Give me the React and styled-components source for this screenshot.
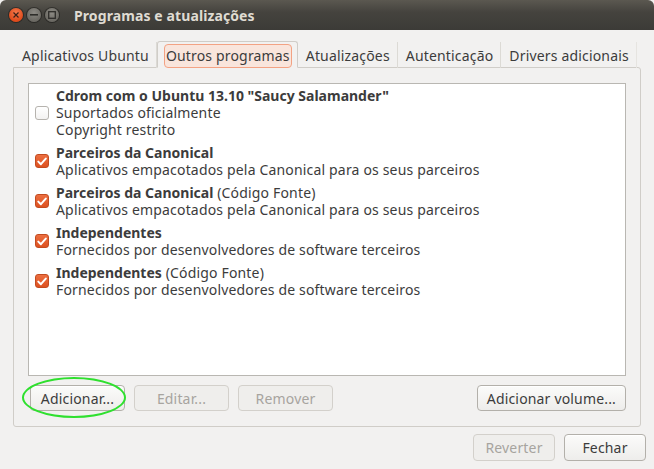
import React from 'react';
import styled, { createGlobalStyle } from 'styled-components';

const GlobalStyle = createGlobalStyle`
  html, body {
    margin: 0;
    padding: 0;
    background: #f2f1f0;
  }
  body {
    font-family: "Noto Sans", "DejaVu Sans", sans-serif;
    color: #3c3c3c;
  }
`;

const sources = [
  { title: 'Cdrom com o Ubuntu 13.10 "Saucy Salamander"', lines: ['Suportados oficialmente', 'Copyright restrito'], checked: false },
  { title: 'Parceiros da Canonical', lines: ['Aplicativos empacotados pela Canonical para os seus parceiros'], checked: true },
  { title: 'Parceiros da Canonical', extra: '(Código Fonte)', lines: ['Aplicativos empacotados pela Canonical para os seus parceiros'], checked: true },
  { title: 'Independentes', lines: ['Fornecidos por desenvolvedores de software terceiros'], checked: true },
  { title: 'Independentes', extra: '(Código Fonte)', lines: ['Fornecidos por desenvolvedores de software terceiros'], checked: true },
];

const tabs = ['Aplicativos Ubuntu', 'Outros programas', 'Atualizações', 'Autenticação', 'Drivers adicionais'];

function Check({ checked }) {
  return (
    <CheckBox $checked={checked}>
      {checked && (
        <svg width="10" height="9" viewBox="0 0 10 9">
          <path d="M1.3 4.6 L3.9 7.2 L8.8 1.6" fill="none" stroke="#fff" strokeWidth="2" strokeLinecap="round" strokeLinejoin="round" />
        </svg>
      )}
    </CheckBox>
  );
}

export default function App() {
  return (
    <>
      <GlobalStyle />
      <Window>
        <TitleBar>
          <WinButtons>
            <CloseBtn>
              <svg width="6" height="6" viewBox="0 0 6 6">
                <path d="M0.5 0.5 L5.5 5.5 M5.5 0.5 L0.5 5.5" stroke="#3a2018" strokeWidth="1.2" />
              </svg>
            </CloseBtn>
            <GreyBtn>
              <svg width="8" height="2" viewBox="0 0 8 2"><rect width="8" height="1.6" fill="#2e2d2a" /></svg>
            </GreyBtn>
            <GreyBtn>
              <svg width="8" height="8" viewBox="0 0 8 8"><rect x="0.7" y="0.7" width="6.6" height="6.6" fill="none" stroke="#2e2d2a" strokeWidth="1.3" /></svg>
            </GreyBtn>
          </WinButtons>
          <Title>Programas e atualizações</Title>
        </TitleBar>

        <Body>
          <TabRow>
            {tabs.map((t, i) => (
              <Tab key={t} $active={i === 1} $last={i === tabs.length - 1}>
                <TabLabel $active={i === 1}>{t}</TabLabel>
              </Tab>
            ))}
          </TabRow>
          <Panel>
            <ListBox>
              {sources.map((s, i) => (
                <Item key={i}>
                  <Check checked={s.checked} />
                  <ItemText>
                    <Line>
                      <b>{s.title}</b>
                      {s.extra && <> {s.extra}</>}
                    </Line>
                    {s.lines.map((l) => (
                      <Line key={l}>{l}</Line>
                    ))}
                  </ItemText>
                </Item>
              ))}
            </ListBox>
            <ButtonRow>
              <Circled>
                <Button>Adicionar...</Button>
                <Ring />
              </Circled>
              <Button disabled>Editar...</Button>
              <Button disabled>Remover</Button>
              <Spacer />
              <Button>Adicionar volume...</Button>
            </ButtonRow>
          </Panel>
          <ActionRow>
            <Button disabled $w={82}>Reverter</Button>
            <Button $w={82}>Fechar</Button>
          </ActionRow>
        </Body>
      </Window>
    </>
  );
}

const Window = styled.div`
  width: 654px;
  height: 469px;
  display: flex;
  flex-direction: column;
  background: #f2f1f0;
  overflow: hidden;
  border-radius: 6px 6px 0 0;
`;

const TitleBar = styled.div`
  height: 30px;
  flex: none;
  display: flex;
  align-items: center;
  padding-left: 9px;
  background: linear-gradient(#5b5850, #45433e 40%, #3c3b37);
`;

const WinButtons = styled.div`
  display: flex;
  gap: 4px;
  margin-right: 15px;
`;

const CircleBase = styled.div`
  width: 14px;
  height: 14px;
  border-radius: 50%;
  display: flex;
  align-items: center;
  justify-content: center;
  box-shadow: 0 0 0 1px rgba(0, 0, 0, 0.35);
`;

const CloseBtn = styled(CircleBase)`
  background: radial-gradient(circle at 50% 35%, #f57a4d, #df4a1a 70%);
`;

const GreyBtn = styled(CircleBase)`
  background: radial-gradient(circle at 50% 35%, #8c8a84, #6b6963 70%);
`;

const Title = styled.div`
  font-family: "Noto Sans", "DejaVu Sans", sans-serif;
  font-weight: 700;
  font-size: 14px;
  color: #dfdbd2;
  letter-spacing: 0.1px;
`;

const Body = styled.div`
  flex: 1;
  display: flex;
  flex-direction: column;
  padding: 12px 13px 0 13px;
`;

const TabRow = styled.div`
  display: flex;
  height: 26px;
  padding-left: 1px;
  position: relative;
  z-index: 1;
  margin-bottom: -1px;
`;

const Tab = styled.div`
  display: flex;
  align-items: center;
  padding: 2px 5px 0 6px;
  font-size: 14px;
  letter-spacing: 0.17px;
  white-space: nowrap;
  color: #3c3c3c;
  border-right: 1px solid ${(p) => (p.$last ? '#e6e4e0' : '#dcdad5')};
  ${(p) =>
    p.$active &&
    `
    background: #f2f1f0;
    border: 1px solid #d0cdc8;
    border-bottom: 1px solid #f2f1f0;
    border-radius: 3px 3px 0 0;
    margin-top: -1px;
  `}
`;

const TabLabel = styled.span`
  padding: 1px 1px 2px;
  border-radius: 4px;
  border: 1px solid transparent;
  ${(p) =>
    p.$active &&
    `
    border-color: #f3a283;
    background: #f9e5dc;
  `}
`;

const Panel = styled.div`
  height: 360px;
  box-sizing: border-box;
  border: 1px solid #d0cdc8;
  border-radius: 0 3px 3px 3px;
  padding: 15px 14px 15px 14px;
  display: flex;
  flex-direction: column;
  gap: 9px;
`;

const ListBox = styled.div`
  height: 294px;
  box-sizing: border-box;
  background: #fff;
  border: 1px solid #b9b7b2;
  padding: 3px 0 0 6px;
  display: flex;
  flex-direction: column;
  gap: 6px;
`;

const Item = styled.div`
  display: flex;
  align-items: center;
  gap: 7px;
`;

const CheckBox = styled.div`
  width: 14px;
  height: 14px;
  box-sizing: border-box;
  flex: none;
  border-radius: 3px;
  display: flex;
  align-items: center;
  justify-content: center;
  border: 1px solid ${(p) => (p.$checked ? '#c34b20' : '#b6b3ae')};
  background: ${(p) => (p.$checked ? 'linear-gradient(#ec6f41, #dd5220)' : 'linear-gradient(#fff, #f3f2f1)')};
`;

const ItemText = styled.div`
  display: flex;
  flex-direction: column;
`;

const Line = styled.div`
  font-size: 14px;
  line-height: 17px;
  letter-spacing: 0.17px;
  color: #3c3c3c;
  white-space: nowrap;
  b {
    font-weight: 700;
    letter-spacing: 0;
  }
`;

const ButtonRow = styled.div`
  display: flex;
  align-items: center;
  gap: 9px;
  padding-left: 2px;
`;

const Spacer = styled.div`
  flex: 1;
`;

const Circled = styled.div`
  position: relative;
  display: flex;
`;

const Ring = styled.div`
  position: absolute;
  left: -8px;
  top: -8px;
  width: 104px;
  height: 41px;
  border: 2px solid #2fe02f;
  border-radius: 50%;
  box-sizing: border-box;
  pointer-events: none;
`;

const Button = styled.button`
  height: 26px;
  min-width: ${(p) => (p.$w ? `${p.$w}px` : '95px')};
  padding: 0 9px;
  box-sizing: border-box;
  font-family: "Noto Sans", "DejaVu Sans", sans-serif;
  font-size: 14px;
  letter-spacing: 0.17px;
  color: #3c3c3c;
  border: 1px solid #b3b0aa;
  border-radius: 4px;
  background: linear-gradient(#fbfbfa, #eeedeb);
  box-shadow: inset 0 1px 0 #fff;
  &:disabled {
    color: #a7a49f;
    border-color: #d3d0cb;
    background: #efeeec;
    box-shadow: none;
  }
`;

const ActionRow = styled.div`
  display: flex;
  justify-content: flex-end;
  gap: 9px;
  padding: 7px 8px 0 0;
  margin-right: -13px;
  ${Button} {
    height: 27px;
  }
`;
